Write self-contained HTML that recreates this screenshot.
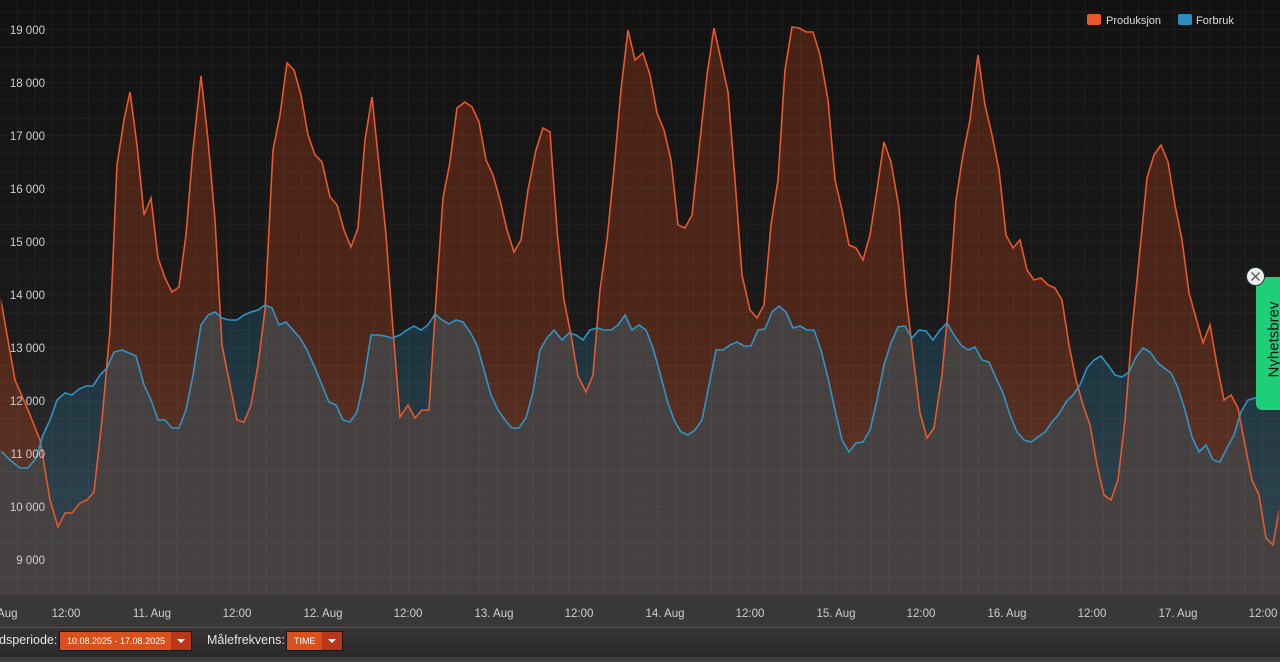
<!DOCTYPE html>
<html><head><meta charset="utf-8"><style>
html,body{margin:0;padding:0;width:1280px;height:662px;overflow:hidden;background:#141414;font-family:"Liberation Sans",sans-serif}
.ax{fill:#cfcfcf;font-size:11.5px;font-family:"Liberation Sans",sans-serif}
#bar{position:absolute;left:0;top:627px;width:1280px;height:30px;background:linear-gradient(#363434,#2a2828);border-top:1px solid #555}
#strip{position:absolute;left:0;top:657px;width:1280px;height:5px;background:#3c3c3c}
.lbl{position:absolute;top:633px;color:#e6e6e6;font-size:12.5px}
.sel{position:absolute;top:631px;height:20px;background:#d9501f;border:1px solid #1a1a1a;color:#fff;font-size:9px;line-height:19px;box-sizing:border-box;white-space:nowrap;overflow:hidden}
.sel .ar{position:absolute;right:0;top:0;width:20px;height:100%;background:#b8361a}
.sel .ar:after{content:"";position:absolute;left:6px;top:7px;border-left:4px solid transparent;border-right:4px solid transparent;border-top:4px solid #fff}
#tab{position:absolute;left:1256px;top:277px;width:30px;height:133px;background:#1fcf78;border-radius:6px 0 0 6px}
#tab span{position:absolute;left:-37px;top:54px;width:110px;text-align:center;transform:rotate(-90deg);font-size:15px;color:#111}
#cls{position:absolute;left:1246px;top:267px;width:17px;height:17px;border-radius:50%;background:#eee;border:1.5px solid #234;}
</style></head><body>
<svg width="1280" height="627" style="position:absolute;left:0;top:0">
<defs>
<linearGradient id="bg" x1="0" y1="0" x2="0" y2="1"><stop offset="0" stop-color="#121212"/><stop offset="0.55" stop-color="#1b1a1a"/><stop offset="1" stop-color="#3d3a3a"/></linearGradient>
<linearGradient id="gr" x1="0" y1="0" x2="0" y2="1" gradientUnits="userSpaceOnUse" y1="300" y2="595"><stop offset="0" stop-color="#3e3a3a"/><stop offset="1" stop-color="#454141"/></linearGradient>
<pattern id="grid" width="17.8" height="17.67" patternUnits="userSpaceOnUse" x="-0.5" y="12.33"><path d="M17.8 0V17.67M0 17.67H17.8" fill="none" stroke="#ffffff" stroke-opacity="0.07" stroke-width="1"/></pattern>
<polygon id="bp" points="0,595 0,450 10,460 20,468 28,468 36,458 43,435 50,420 57,400 65,393 72,395 79,389 86,386 93,386 100,375 107,368 114,352 122,350 129,353 136,356 144,385 151,400 158,420 165,420 172,428 179,428 186,410 193,375 201,325 208,315 215,312 222,318 229,320 237,320 244,315 251,312 258,310 265,305 272,308 279,325 286,322 293,330 300,338 307,350 315,368 322,385 329,402 336,405 343,420 350,422 357,412 364,380 371,335 378,335 385,336 392,338 400,335 407,330 414,326 421,330 428,325 435,314 442,320 449,324 456,320 463,322 470,332 477,345 484,370 491,395 498,410 505,420 512,428 519,428 526,418 533,392 540,350 547,338 554,330 562,340 569,333 576,335 583,340 590,330 597,328 604,330 611,330 618,325 625,315 632,330 639,325 646,330 653,348 660,373 667,400 674,420 681,432 688,435 695,430 702,420 709,385 716,350 723,350 730,345 737,342 744,346 751,346 758,330 765,329 772,312 779,306 786,312 793,328 800,326 807,330 814,330 821,350 828,378 835,410 842,440 849,452 856,443 863,442 870,430 877,400 884,365 891,343 898,327 905,326 912,338 919,330 926,331 933,340 940,330 947,323 954,335 961,345 968,350 975,347 982,360 989,362 996,378 1003,393 1010,415 1017,432 1024,440 1031,442 1038,437 1045,432 1052,422 1059,414 1066,402 1073,395 1080,385 1087,368 1094,360 1101,356 1108,365 1115,375 1122,377 1129,372 1136,357 1143,348 1150,352 1157,362 1164,368 1171,373 1178,388 1185,410 1192,437 1199,452 1206,445 1213,460 1220,462 1227,448 1234,435 1241,412 1248,400 1255,398 1262,400 1269,400 1280,400 1280,595"/>
<polygon id="op" points="0,595 0,295 15,380 28,410 40,440 50,500 58,527 65,513 72,513 80,503 87,500 94,492 102,420 110,330 117,165 124,120 130,92 137,145 144,215 151,198 158,258 165,278 172,292 179,287 186,235 193,150 201,76 208,140 215,220 222,345 230,385 237,420 244,422 251,405 258,365 265,310 273,150 280,115 287,63 294,70 301,95 308,135 315,155 322,162 330,197 337,205 344,230 351,247 358,228 365,140 372,97 379,165 386,235 393,330 400,417 408,405 415,418 422,410 429,410 436,300 443,198 450,162 457,108 465,102 472,107 479,122 486,160 493,175 500,200 507,230 514,252 521,240 528,190 536,150 543,128 550,132 557,230 564,300 571,335 578,376 586,392 593,375 600,290 607,240 614,170 621,90 628,30 635,60 643,53 650,75 657,113 664,130 671,160 678,225 685,228 692,215 699,150 707,75 714,28 721,60 728,92 735,180 742,275 750,310 757,318 764,305 771,225 778,180 785,70 792,27 799,28 806,32 813,32 820,55 828,100 835,180 842,210 849,245 856,248 863,260 870,235 877,190 884,142 891,162 899,208 906,295 913,355 920,413 927,438 934,428 942,375 949,300 956,200 963,155 970,120 978,55 985,105 992,135 999,170 1006,235 1013,248 1020,240 1027,270 1034,280 1041,278 1048,285 1055,288 1062,300 1069,345 1076,380 1083,405 1090,425 1097,465 1104,495 1111,500 1118,480 1125,420 1132,330 1140,250 1147,178 1154,155 1161,145 1168,162 1175,205 1182,240 1189,293 1196,318 1203,343 1210,325 1217,365 1224,400 1231,395 1238,408 1245,445 1252,480 1259,495 1266,538 1273,545 1280,505 1280,595"/>
<clipPath id="cb"><use href="#bp"/></clipPath>
<clipPath id="pl"><rect x="1.5" y="0" width="1277" height="592"/></clipPath>
</defs>
<rect width="1280" height="595" fill="url(#bg)"/>
<rect y="595" width="1280" height="32" fill="#3a3737"/>
<use href="#op" fill="#c2461a" fill-opacity="0.3"/>
<use href="#bp" fill="#1e6a8c" fill-opacity="0.3"/>
<use href="#op" fill="url(#gr)" clip-path="url(#cb)"/>
<rect width="1280" height="595" fill="url(#grid)"/>
<g clip-path="url(#pl)">
<use href="#op" fill="none" stroke="#e8582a" stroke-width="1.6"/>
<use href="#bp" fill="none" stroke="#2e95c8" stroke-width="1.6"/>
</g>
<g class="ax" text-anchor="end">
<text x="45" y="34">19 000</text><text x="45" y="87">18 000</text><text x="45" y="140">17 000</text><text x="45" y="193">16 000</text><text x="45" y="246">15 000</text><text x="45" y="299">14 000</text><text x="45" y="352">13 000</text><text x="45" y="405">12 000</text><text x="45" y="458">11 000</text><text x="45" y="511">10 000</text><text x="45" y="564">9 000</text>
</g>
<g class="ax" text-anchor="middle">
<text x="-2" y="617">10. Aug</text><text x="66" y="617">12:00</text><text x="152" y="617">11. Aug</text><text x="237" y="617">12:00</text><text x="323" y="617">12. Aug</text><text x="408" y="617">12:00</text><text x="494" y="617">13. Aug</text><text x="579" y="617">12:00</text><text x="665" y="617">14. Aug</text><text x="750" y="617">12:00</text><text x="836" y="617">15. Aug</text><text x="921" y="617">12:00</text><text x="1007" y="617">16. Aug</text><text x="1092" y="617">12:00</text><text x="1178" y="617">17. Aug</text><text x="1263" y="617">12:00</text>
</g>
<rect x="1087" y="14" width="14" height="11" rx="2" fill="#e8582a"/>
<text x="1106" y="24" fill="#ddd" font-size="11">Produksjon</text>
<rect x="1178" y="14" width="14" height="11" rx="2" fill="#2e8ec0"/>
<text x="1196" y="24" fill="#ddd" font-size="11">Forbruk</text>
</svg>
<div id="bar"></div>
<div id="strip"></div>
<div class="lbl" style="left:-1px">dsperiode:</div>
<div class="sel" style="left:59px;width:133px;padding-left:7px">10.08.2025 - 17.08.2025<div class="ar"></div></div>
<div class="lbl" style="left:207px">Målefrekvens:</div>
<div class="sel" style="left:286px;width:57px;padding-left:7px">TIME<div class="ar"></div></div>
<div id="tab"><span>Nyhetsbrev</span></div>
<div id="cls"><svg width="17" height="17" style="position:absolute;left:0;top:0"><path d="M4.5 4.5L12.5 12.5M12.5 4.5L4.5 12.5" stroke="#555" stroke-width="1.3"/></svg></div>
</body></html>
